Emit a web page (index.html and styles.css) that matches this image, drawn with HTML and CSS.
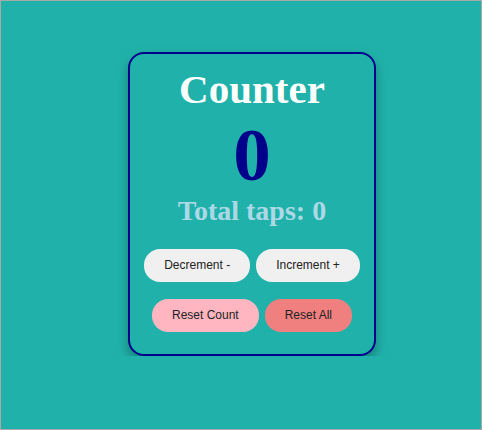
FILE: index.html
```html
<!DOCTYPE html>
<html>
<head>
<meta charset="utf-8">
<link rel="stylesheet" href="styles.css">
</head>
<body>
<main class="page">
  <section class="card">
    <h1 class="title">Counter</h1>
    <div class="count">0</div>
    <h2 class="taps">Total taps: 0</h2>
    <div class="row">
      <button class="btn">Decrement -</button>
      <button class="btn">Increment +</button>
    </div>
    <div class="row row-reset">
      <button class="btn btn-pink">Reset Count</button>
      <button class="btn btn-coral">Reset All</button>
    </div>
  </section>
</main>
</body>
</html>
```
FILE: styles.css
```css
html {
  height: 100%;
  background: #20b2aa;
  box-shadow: inset 0 0 0 1px #a9a9a9;
}
body {
  margin: 0;
  font-family: "Liberation Serif", serif;
}
.page {
  padding: 52px 0 0 128px;
}
.card {
  box-sizing: border-box;
  width: 248px;
  border: 2px solid #00008b;
  border-radius: 16px;
  background: #20b2aa;
  box-shadow: 0 6px 12px rgba(0, 0, 0, 0.3);
  padding: 12px 0 22px;
  display: flex;
  flex-direction: column;
  align-items: center;
}
.title {
  margin: 0;
  font-size: 41px;
  line-height: 46px;
  font-weight: bold;
  color: #ffffff;
}
.count {
  margin-top: 5px;
  font-size: 75px;
  line-height: 75px;
  font-weight: bold;
  color: #00008b;
}
.taps {
  margin: 3px 0 0;
  font-size: 28px;
  line-height: 32px;
  font-weight: bold;
  color: #add8e6;
}
.row {
  display: flex;
  gap: 6px;
  margin-top: 22px;
}
.row-reset {
  margin-top: 17px;
}
.btn {
  font-family: "Liberation Sans", Arial, sans-serif;
  font-size: 12px;
  line-height: 13px;
  padding: 10px 20px;
  border: none;
  border-radius: 16px;
  background: #f0f0f0;
  color: #222;
}
.btn-pink {
  background: #ffb6c1;
}
.btn-coral {
  background: #f08080;
}
```
